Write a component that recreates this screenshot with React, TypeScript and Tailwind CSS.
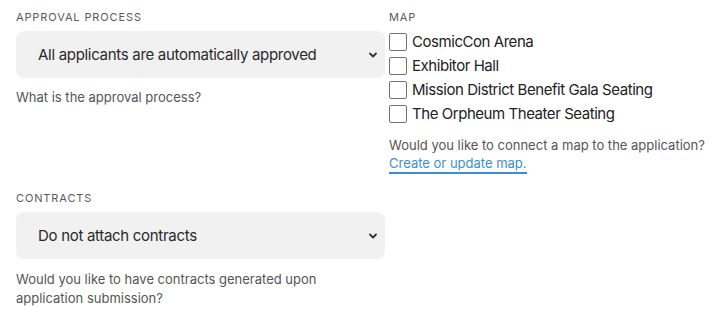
import React from 'react';

const maps = [
  'CosmicCon Arena',
  'Exhibitor Hall',
  'Mission District Benefit Gala Seating',
  'The Orpheum Theater Seating',
];

const Chevron = () => (
  <svg width="10" height="10" viewBox="0 0 10 10" className="text-[#333]">
    <path d="M2 3.5 L5 6.5 L8 3.5" fill="none" stroke="currentColor" strokeWidth="1.8" strokeLinecap="round" strokeLinejoin="round" />
  </svg>
);

const Select = ({ value }: { value: string }) => (
  <div className="flex h-[47px] items-center justify-between rounded-lg bg-[#f1f1f1] pl-[22px] pr-[7px]">
    <span className="pt-[2px] text-[15px] tracking-[-0.02em] text-[#2a2a2a]">{value}</span>
    <Chevron />
  </div>
);

export default function App() {
  return (
    <div className="flex w-[712px] h-[317px] bg-white px-4 pt-[9px] font-['Inter',sans-serif]">
      {/* Left column */}
      <div className="w-[369px] shrink-0 flex flex-col">
        <div className="text-[11px] tracking-[0.08em] text-[#5a5a5a] leading-[16px] mb-[6px]">APPROVAL PROCESS</div>
        <Select value="All applicants are automatically approved" />
        <p className="mt-[10px] text-[13px] leading-[19px] text-[#555]">What is the approval process?</p>

        <div className="mt-[83px] text-[11px] tracking-[0.08em] text-[#5a5a5a] leading-[16px] mb-[6px]">CONTRACTS</div>
        <Select value="Do not attach contracts" />
        <p className="mt-[11px] text-[13px] leading-[19px] text-[#555] w-[320px]">
          Would you like to have contracts generated upon application submission?
        </p>
      </div>

      {/* Right column */}
      <div className="ml-1 w-[311px] shrink-0 flex flex-col">
        <div className="text-[11px] tracking-[0.08em] text-[#5a5a5a] leading-[16px] mb-[8px]">MAP</div>
        <div className="flex flex-col gap-[6px]">
          {maps.map((m) => (
            <label key={m} className="flex items-center gap-[5px] h-[18px]">
              <span className="w-[18px] h-[18px] rounded-[2px] border border-[#707070] bg-white" />
              <span className="text-[15px] tracking-[-0.03em] text-[#222]">{m}</span>
            </label>
          ))}
        </div>
        <p className="mt-[13px] whitespace-nowrap text-[13px] leading-[19px] text-[#555]">Would you like to connect a map to the application?</p>
        <a className="self-start text-[13px] leading-[17px] text-[#3b8fd0] border-b-2 border-[#3b8fd0]">Create or update map.</a>
      </div>
    </div>
  );
}
